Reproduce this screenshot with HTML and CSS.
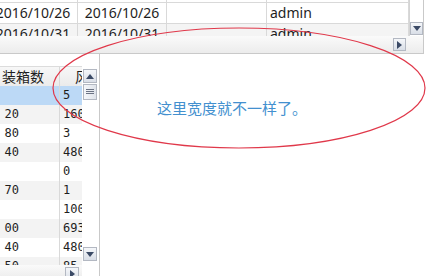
FILE: index.html
```html
<!DOCTYPE html>
<html lang="zh">
<head>
  <meta charset="UTF-8" />
  <title>宽度对比</title>
  <link rel="stylesheet" href="styles.css">
</head>
<body>
  <div class="page">
    <!-- Top grid -->
    <div class="top-grid">
      <div class="tg-body">
        <div class="tg-rows">
          <div class="tg-row cut"><div class="c c1"></div><div class="c c2"></div><div class="c c3"></div><div class="c c4"></div></div>
          <div class="tg-row"><div class="c c1">2016/10/26</div><div class="c c2">2016/10/26</div><div class="c c3"></div><div class="c c4">admin</div></div>
          <div class="tg-row alt"><div class="c c1">2016/10/31</div><div class="c c2">2016/10/31</div><div class="c c3"></div><div class="c c4">admin</div></div>
        </div>
        <div class="vbar">
          <span class="sbtn">
            <svg width="8" height="5" viewBox="0 0 8 5"><polygon points="0,0 8,0 4,5" fill="#3b4a66"/></svg>
          </span>
        </div>
      </div>
      <div class="hbar">
        <span class="sbtn">
          <svg width="5" height="8" viewBox="0 0 5 8"><polygon points="0,0 5,4 0,8" fill="#3b4a66"/></svg>
        </span>
      </div>
    </div>

    <div class="lower">
      <!-- Left grid -->
      <div class="left-panel">
        <div class="lg-body">
          <div class="lg-cols">
            <div class="lg-row head"><div class="k">装箱数</div><div class="v">风</div></div>
            <div class="lg-row sel"><div class="k"></div><div class="v">5</div></div>
            <div class="lg-row alt"><div class="k">20</div><div class="v">160</div></div>
            <div class="lg-row"><div class="k">80</div><div class="v">3</div></div>
            <div class="lg-row alt"><div class="k">40</div><div class="v">480</div></div>
            <div class="lg-row"><div class="k"></div><div class="v">0</div></div>
            <div class="lg-row alt"><div class="k">70</div><div class="v">1</div></div>
            <div class="lg-row"><div class="k"></div><div class="v">100</div></div>
            <div class="lg-row alt"><div class="k">00</div><div class="v">693</div></div>
            <div class="lg-row"><div class="k">40</div><div class="v">480</div></div>
            <div class="lg-row alt"><div class="k">50</div><div class="v">85</div></div>
          </div>
          <div class="lg-vbar">
            <span class="sbtn">
              <svg width="8" height="5" viewBox="0 0 8 5"><polygon points="0,5 8,5 4,0" fill="#3b4a66"/></svg>
            </span>
            <span class="thumb">
              <svg width="8" height="6" viewBox="0 0 8 6"><path d="M0 0.5H8M0 2.5H8M0 4.5H8" stroke="#6b7384" stroke-width="1"/></svg>
            </span>
            <span class="spacer"></span>
            <span class="sbtn">
              <svg width="8" height="5" viewBox="0 0 8 5"><polygon points="0,0 8,0 4,5" fill="#3b4a66"/></svg>
            </span>
          </div>
        </div>
        <div class="lg-hbar">
          <span class="sbtn">
            <svg width="5" height="8" viewBox="0 0 5 8"><polygon points="0,0 5,4 0,8" fill="#3b4a66"/></svg>
          </span>
        </div>
      </div>

      <p class="note">这里宽度就不一样了。</p>
    </div>

    <!-- Red annotation ellipse -->
    <svg class="mark" width="444" height="276" viewBox="0 0 444 276">
      <ellipse cx="239" cy="88" rx="186" ry="60" fill="none" stroke="#e0384a" stroke-width="1.2"/>
    </svg>
  </div>
</body>
</html>
```

FILE: styles.css
```css
* {
  margin: 0;
  padding: 0;
  box-sizing: border-box;
}

body {
  background: #ffffff;
  color: #1e1e1e;
  font-family: 'Noto Sans', sans-serif;
}

.page {
  position: relative;
  width: 444px;
  height: 276px;
  overflow: hidden;
}

/* Top grid */
.top-grid {
  width: 424px;
  height: 54px;
  border-right: 1px solid #c9c9c9;
  border-bottom: 1px solid #c9c9c9;
  display: flex;
  flex-direction: column;
}

.tg-body {
  height: 36px;
  display: flex;
}

.tg-rows {
  flex: 1;
  overflow: hidden;
}

.tg-row {
  display: flex;
  height: 21px;
  margin-left: -11px;
  border-bottom: 1px solid #d9d9d9;
  font-size: 14px;
  line-height: 20px;
}

.tg-row.cut {
  margin-top: -18px;
}

.tg-row.alt {
  background: #f4f4f4;
}

.tg-row .c {
  flex-shrink: 0;
  border-right: 1px solid #d9d9d9;
  white-space: nowrap;
  overflow: hidden;
}

.c1, .c2 {
  width: 89px;
  text-align: center;
}

.c3 {
  width: 100px;
}

.c4 {
  width: 142px;
  padding-left: 3px;
}

.vbar {
  width: 14px;
  border-left: 1px solid #d4d4d4;
  display: flex;
  align-items: flex-end;
  padding-bottom: 1px;
}

.hbar {
  height: 17px;
  background: linear-gradient(#fafafa, #ececec);
  display: flex;
  justify-content: flex-end;
  padding: 2px 17px 0 0;
}

.sbtn {
  width: 13px;
  height: 13px;
  border: 1px solid #b3b8c2;
  background: linear-gradient(#f5f7fa, #d9dee7);
  display: flex;
  align-items: center;
  justify-content: center;
  flex-shrink: 0;
}

/* Lower area */
.lower {
  display: flex;
}

.left-panel {
  width: 100px;
  height: 222px;
  border-right: 1px solid #c9c9c9;
  padding-top: 12px;
  display: flex;
  flex-direction: column;
}

.lg-body {
  height: 199px;
  display: flex;
}

.lg-cols {
  width: 82px;
  overflow: hidden;
}

.lg-row {
  display: flex;
  height: 19px;
  font-family: 'DejaVu Sans Mono', monospace;
  font-size: 12px;
  line-height: 19px;
}

.lg-row.head {
  height: 20px;
  line-height: 19px;
  border-top: 1px solid #dcdcdc;
  background: linear-gradient(#f7f7f7, #ebebeb);
  font-family: 'Noto Sans CJK SC', sans-serif;
  font-size: 14px;
}

.lg-row.sel {
  background: #bcd9f6;
}

.lg-row.alt {
  background: #f3f3f3;
}

.lg-row .k {
  width: 60px;
  flex-shrink: 0;
  border-right: 1px solid #d9d9d9;
  text-align: right;
  padding-right: 40px;
  white-space: nowrap;
}

.lg-row.head .k {
  text-align: left;
  padding: 0 0 0 2px;
}

.lg-row .v {
  flex-shrink: 0;
  width: 40px;
  padding-left: 3px;
  white-space: nowrap;
}

.lg-row.head .v {
  padding-left: 15px;
}

.lg-vbar {
  width: 17px;
  display: flex;
  flex-direction: column;
  padding: 3px 2px 4px 1px;
  gap: 1px;
}

.lg-vbar .sbtn {
  width: 14px;
  height: 14px;
}

.thumb {
  width: 14px;
  height: 16px;
  border: 1px solid #b3b8c2;
  background: linear-gradient(90deg, #f5f7fa, #dfe3ea);
  display: flex;
  align-items: center;
  justify-content: center;
}

.spacer {
  flex: 1;
}

.lg-hbar {
  width: 82px;
  height: 14px;
  background: linear-gradient(#fafafa, #ececec);
  display: flex;
  justify-content: flex-end;
  padding: 2px 3px 0 0;
}

.lg-hbar .sbtn {
  width: 14px;
  height: 14px;
}

.note {
  padding: 45px 0 0 57px;
  font-family: 'Noto Sans CJK SC', sans-serif;
  font-size: 15px;
  line-height: 18px;
  color: #4390cf;
  white-space: nowrap;
}

.mark {
  position: absolute;
  top: 0;
  left: 0;
  pointer-events: none;
}
```
